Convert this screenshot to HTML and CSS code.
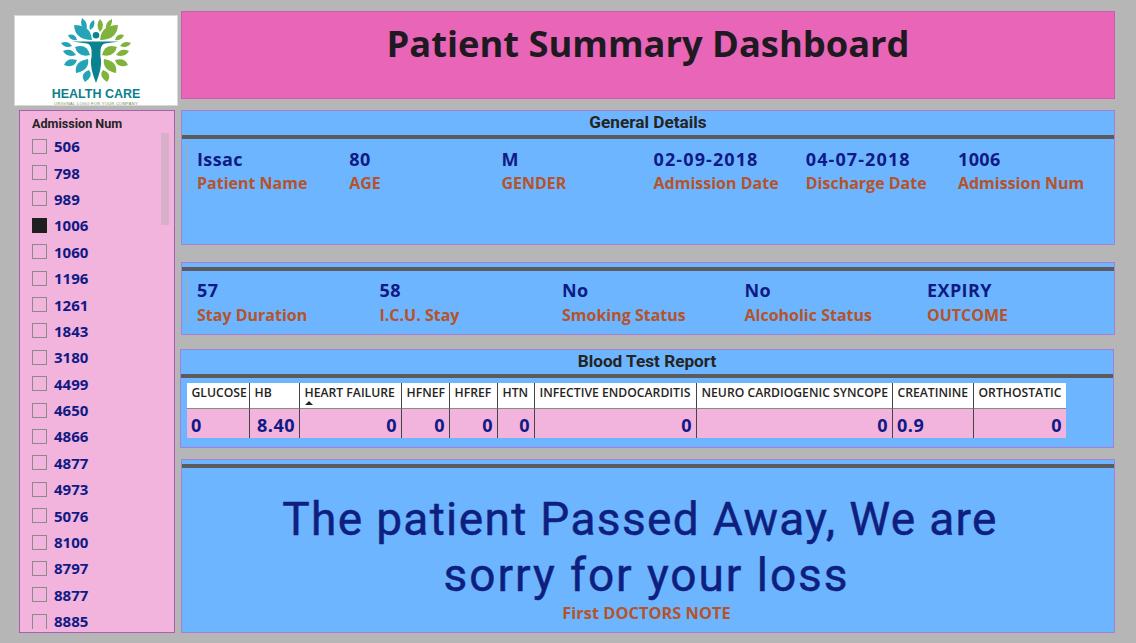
FILE: index.html
```html
<!DOCTYPE html>
<html lang="en">
<head>
    <meta charset="UTF-8">
    <title>Patient Summary Dashboard</title>
    <link rel="stylesheet" href="styles.css">
</head>
<body>
    <div class="page">
        <aside class="side">
            <div class="logo">
                <svg class="logo-mark" width="70" height="65" viewBox="0 0 70 65">
                    <g fill="#25a4b8">
                        <path d="M21 0Q28 5 25 13Q18 8 21 0z"/>
                        <path d="M33 2Q35 9 29 12Q27 5 33 2z"/>
                        <path d="M13 7Q30 7 31 22Q14 22 13 7z"/>
                        <path d="M7 17Q14 15 16 22Q9 23 7 17z"/>
                        <path d="M0 25Q7 22 11 28Q4 31 0 25z"/>
                        <path d="M2 33Q10 29 15 37Q6 40 2 33z"/>
                        <path d="M14 29Q26 25 29 37Q17 40 14 29z"/>
                        <path d="M3 47Q6 39 16 42Q13 51 3 47z"/>
                        <path d="M15 55Q13 43 27 41Q29 52 15 55z"/>
                        <path d="M24 64Q18 56 28 52Q33 58 24 64z"/>
                    </g>
                    <g fill="#7fb33c">
                        <path d="M39 1Q45 7 39 14Q34 7 39 1z"/>
                        <path d="M51 1Q52 8 45 11Q44 4 51 1z"/>
                        <path d="M57 7Q40 7 39 22Q56 22 57 7z"/>
                        <path d="M63 17Q56 15 54 22Q61 23 63 17z"/>
                        <path d="M70 25Q63 22 59 28Q66 31 70 25z"/>
                        <path d="M68 33Q60 29 55 37Q64 40 68 33z"/>
                        <path d="M56 29Q44 25 41 37Q53 40 56 29z"/>
                        <path d="M67 47Q64 39 54 42Q57 51 67 47z"/>
                        <path d="M55 55Q57 43 43 41Q41 52 55 55z"/>
                        <path d="M46 64Q52 56 42 52Q37 58 46 64z"/>
                    </g>
                    <g fill="#0b8290">
                        <circle cx="35" cy="17.3" r="3.3"/>
                        <path d="M11 23.5H58L44 25.5Q40 26.5 39.5 32Q39 38 40 42Q41 50 35 65Q29 50 30 42Q31 38 30.5 32Q30 26.5 26 25.5z"/>
                    </g>
                </svg>
                <div class="logo-name">HEALTH CARE</div>
                <div class="logo-tag">ORIGINAL LOGO FOR YOUR COMPANY</div>
            </div>
            <div class="slicer">
                <div class="slicer-title">Admission Num</div>
                <div class="scroll-thumb"></div>
                <ul class="slicer-list">
                    <li><span class="check"></span>506</li>
                    <li><span class="check"></span>798</li>
                    <li><span class="check"></span>989</li>
                    <li><span class="check on"></span>1006</li>
                    <li><span class="check"></span>1060</li>
                    <li><span class="check"></span>1196</li>
                    <li><span class="check"></span>1261</li>
                    <li><span class="check"></span>1843</li>
                    <li><span class="check"></span>3180</li>
                    <li><span class="check"></span>4499</li>
                    <li><span class="check"></span>4650</li>
                    <li><span class="check"></span>4866</li>
                    <li><span class="check"></span>4877</li>
                    <li><span class="check"></span>4973</li>
                    <li><span class="check"></span>5076</li>
                    <li><span class="check"></span>8100</li>
                    <li><span class="check"></span>8797</li>
                    <li><span class="check"></span>8877</li>
                    <li><span class="check"></span>8885</li>
                </ul>
            </div>
        </aside>
        <main class="main">
            <header class="title-bar"><h1>Patient Summary Dashboard</h1></header>

            <section class="panel general">
                <h2>General Details</h2>
                <div class="rule"></div>
                <div class="cards six">
                    <div class="card"><b>Issac</b><span>Patient Name</span></div>
                    <div class="card"><b>80</b><span>AGE</span></div>
                    <div class="card"><b>M</b><span>GENDER</span></div>
                    <div class="card"><b class="date">02-09-2018</b><span>Admission Date</span></div>
                    <div class="card"><b class="date">04-07-2018</b><span>Discharge Date</span></div>
                    <div class="card"><b>1006</b><span>Admission Num</span></div>
                </div>
            </section>

            <section class="panel stay">
                <div class="rule"></div>
                <div class="cards five">
                    <div class="card"><b>57</b><span>Stay Duration</span></div>
                    <div class="card"><b>58</b><span>I.C.U. Stay</span></div>
                    <div class="card"><b>No</b><span>Smoking Status</span></div>
                    <div class="card"><b>No</b><span>Alcoholic Status</span></div>
                    <div class="card"><b>EXPIRY</b><span>OUTCOME</span></div>
                </div>
            </section>

            <section class="panel blood">
                <h2>Blood Test Report</h2>
                <div class="rule"></div>
                <div class="blood-table">
                    <div class="th">GLUCOSE</div>
                    <div class="th">HB</div>
                    <div class="th sorted">HEART FAILURE</div>
                    <div class="th">HFNEF</div>
                    <div class="th">HFREF</div>
                    <div class="th">HTN</div>
                    <div class="th">INFECTIVE ENDOCARDITIS</div>
                    <div class="th">NEURO CARDIOGENIC SYNCOPE</div>
                    <div class="th">CREATININE</div>
                    <div class="th">ORTHOSTATIC</div>
                    <div class="td">0</div>
                    <div class="td num">8.40</div>
                    <div class="td num">0</div>
                    <div class="td num">0</div>
                    <div class="td num">0</div>
                    <div class="td num">0</div>
                    <div class="td num">0</div>
                    <div class="td num">0</div>
                    <div class="td">0.9</div>
                    <div class="td num">0</div>
                </div>
            </section>

            <section class="panel note">
                <div class="rule"></div>
                <p class="note-text"><span class="note-first">The patient Passed Away, We are</span><br>sorry for your loss</p>
                <p class="note-label">First DOCTORS NOTE</p>
            </section>
        </main>
    </div>
</body>
</html>
```

FILE: styles.css
```css
* {
    box-sizing: border-box;
}
html, body {
    margin: 0;
    height: 100%;
    overflow: hidden;
}
body {
    background: #b6b6b6;
    font-family: 'Open Sans', sans-serif;
}
.page {
    display: flex;
    gap: 2px;
    padding: 11px 21px 0 14px;
}

/* left column */
.side {
    width: 164px;
    flex: none;
    padding-top: 4px;
}
.logo {
    height: 91px;
    background: #fff;
    border: 1px solid #d8d8d8;
    display: flex;
    flex-direction: column;
    align-items: center;
    padding-top: 2px;
}
.logo-mark {
    display: block;
    flex: none;
}
.logo-name {
    font-family: 'Liberation Sans', sans-serif;
    font-weight: 700;
    font-size: 12.5px;
    line-height: 10px;
    margin-top: 5.5px;
    color: #0b7f8c;
}
.logo-tag {
    font-family: 'Liberation Sans', sans-serif;
    font-size: 4px;
    line-height: 5px;
    margin-top: 2px;
    letter-spacing: .3px;
    white-space: nowrap;
    color: #6b8a4a;
}
.slicer {
    position: relative;
    width: 156px;
    height: 523px;
    margin: 4px 0 0 5px;
    background: #f2b3dc;
    border: 1px solid #a95fb0;
}
.slicer-title {
    font-family: 'Roboto', sans-serif;
    font-weight: 700;
    font-size: 12.6px;
    line-height: 14px;
    color: #252423;
    padding: 6px 0 0 12px;
}
.scroll-thumb {
    position: absolute;
    left: 141px;
    top: 22px;
    width: 8px;
    height: 92px;
    background: #d6b0c8;
}
.slicer-list {
    list-style: none;
    margin: 0;
    padding: 2px 0 0 12px;
}
.slicer-list li {
    display: flex;
    align-items: center;
    gap: 7px;
    height: 26.4px;
    font-size: 15px;
    font-weight: 700;
    color: #0f1a85;
}
.slicer-list li:last-child .check {
    border-bottom: none;
}
.check {
    width: 15px;
    height: 15px;
    border: 1px solid #8a8a8a;
    flex: none;
}
.check.on {
    background: #1f1f1f;
    border-color: #1f1f1f;
}

/* right column */
.main {
    width: 935px;
    flex: none;
}
.title-bar {
    height: 88px;
    margin-left: 1px;
    background: #e865b8;
    border: 1px solid #c95cae;
}
.title-bar h1 {
    margin: 0;
    text-align: center;
    font-size: 36.3px;
    line-height: 62px;
    font-weight: 700;
    color: #1f1a22;
}
.panel {
    background: #6db6ff;
    border: 1px solid #a57fd6;
    margin-left: 1px;
}
.panel h2 {
    margin: 0;
    padding-bottom: 2px;
    text-align: center;
    font-family: 'Roboto', sans-serif;
    font-size: 17.2px;
    font-weight: 700;
    line-height: 22px;
    color: #252423;
}
.rule {
    height: 4px;
    background: #5b5b5e;
}
.general {
    height: 135px;
    margin-top: 11px;
}
.stay {
    height: 73px;
    margin-top: 17px;
}
.stay .rule {
    margin-top: 4px;
}
.blood {
    height: 99px;
    margin: 14px 1px 0 0;
}
.note {
    height: 174px;
    margin-top: 11px;
}
.note .rule {
    margin-top: 4px;
}

/* cards */
.cards {
    display: grid;
    position: relative;
    padding-left: 15px;
}
.cards.six {
    grid-template-columns: repeat(6, 152.2px);
    padding-top: 8px;
}
.cards.five {
    grid-template-columns: repeat(5, 182.5px);
    padding-top: 6px;
}
.cards::before {
    content: "";
    position: absolute;
    left: 5px;
    top: 6px;
    width: 1px;
    height: 48px;
    background: #b7a98e;
}
.card b {
    display: block;
    font-size: 18px;
    line-height: 25px;
    font-weight: 700;
    letter-spacing: .4px;
    color: #0f1a85;
}
.card b.date {
    letter-spacing: 1.1px;
}
.card span {
    display: block;
    font-size: 16px;
    line-height: 23px;
    font-weight: 700;
    color: #b5532a;
    white-space: nowrap;
}
.stay .card b {
    line-height: 27px;
}

/* blood table */
.blood-table {
    display: grid;
    grid-template-columns: 63px 50px 102px 48px 48px 37px 162px 196px 81px 92px;
    grid-template-rows: 26px 29px;
    margin: 5px 0 0 6px;
    width: 879px;
}
.th {
    background: #fff;
    border-bottom: 1px solid #8a8a8a;
    border-right: 1px solid #444;
    font-size: 12.2px;
    font-weight: 600;
    line-height: 18px;
    padding: 1px 0 0 4.5px;
    color: #252423;
    white-space: nowrap;
    overflow: hidden;
    position: relative;
}
.th:nth-child(10),
.td:nth-child(20) {
    border-right: none;
}
.th.sorted::after {
    content: "";
    position: absolute;
    left: 5px;
    bottom: 3px;
    border-left: 4px solid transparent;
    border-right: 4px solid transparent;
    border-bottom: 4px solid #252423;
}
.td {
    background: #f2b3dc;
    border-right: 1px solid #444;
    font-size: 18px;
    font-weight: 700;
    letter-spacing: .5px;
    line-height: 32px;
    padding: 0 4px 0 4px;
    color: #0f1a85;
}
.td.num {
    text-align: right;
}

/* note */
.note-text {
    margin: 23px 0 0;
    padding-right: 3px;
    text-align: center;
    font-family: 'Roboto', sans-serif;
    font-size: 46px;
    line-height: 56px;
    font-weight: 400;
    -webkit-text-stroke: .5px #0f1f7f;
    letter-spacing: 1.95px;
    color: #0f1f7f;
}
.note-first {
    padding-right: 13px;
    letter-spacing: 1.35px;
}
.note-label {
    margin: -1.5px 0 0;
    padding-right: 3px;
    text-align: center;
    font-size: 16.4px;
    font-weight: 700;
    line-height: 22px;
    color: #b5532a;
}
```
